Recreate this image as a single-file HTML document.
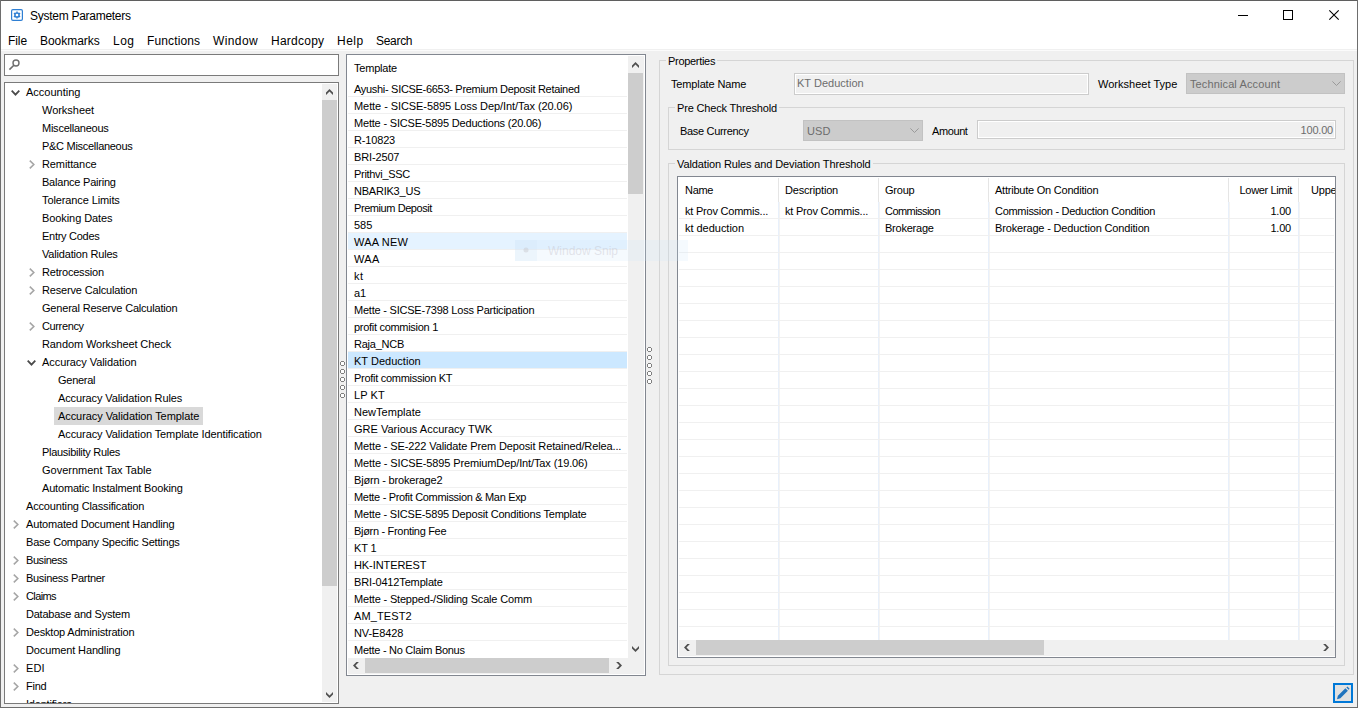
<!DOCTYPE html>
<html><head><meta charset="utf-8"><title>System Parameters</title>
<style>
*{box-sizing:border-box;margin:0;padding:0}
html,body{width:1358px;height:708px;overflow:hidden;background:#f0f0f0}
body{position:relative;font-family:"Liberation Sans", sans-serif;font-size:11px;color:#000}
.a{position:absolute}
.t{position:absolute;white-space:nowrap;line-height:1;letter-spacing:-0.2px}
.s{position:absolute;white-space:nowrap;line-height:1;font-size:12px}
svg{position:absolute;overflow:visible}
.dis{color:#6d6d6d}
</style></head><body>

<div class="a" style="left:0px;top:0px;width:1358px;height:49px;background:#fff;"></div>
<div class="a" style="left:0px;top:49px;width:1358px;height:1px;background:#f0f0f0;"></div>
<div class="a" style="left:0px;top:50px;width:1358px;height:1px;background:#fbfbfb;"></div>
<svg style="left:11px;top:9px" width="12" height="12" viewBox="0 0 12 12">
<rect x="0.6" y="0.6" width="10.8" height="10.8" rx="1.3" fill="#fff" stroke="#2f7fd3" stroke-width="1.2"/>
<circle cx="6" cy="6" r="2.1" fill="none" stroke="#2f7fd3" stroke-width="1.5"/>
<path d="M6 2.5v1.3M6 8.2v1.3M2.9 4.2l1.1.6M8 7.2l1.1.6M2.9 7.8l1.1-.6M8 4.8l1.1-.6" stroke="#2f7fd3" stroke-width="1.4"/>
</svg>
<div class="s" style="left:30px;top:10px;letter-spacing:-0.275px">System Parameters</div>
<div class="a" style="left:1238px;top:15px;width:10px;height:1px;background:#000;"></div>
<div class="a" style="left:1283px;top:10px;width:10px;height:10px;background:transparent;border:1px solid #000"></div>
<svg style="left:1329px;top:10px" width="10" height="10" viewBox="0 0 10 10"><path d="M0.3 0.3L9.7 9.7M9.7 0.3L0.3 9.7" stroke="#000" stroke-width="1.1"/></svg>
<div class="s" style="left:8px;top:35px;letter-spacing:-0.067px">File</div>
<div class="s" style="left:40px;top:35px;letter-spacing:-0.037px">Bookmarks</div>
<div class="s" style="left:113px;top:35px;letter-spacing:0.5px">Log</div>
<div class="s" style="left:147px;top:35px;letter-spacing:0.125px">Functions</div>
<div class="s" style="left:213px;top:35px;letter-spacing:0.4px">Window</div>
<div class="s" style="left:271px;top:35px;letter-spacing:0.243px">Hardcopy</div>
<div class="s" style="left:337px;top:35px;letter-spacing:0.5px">Help</div>
<div class="s" style="left:376px;top:35px;letter-spacing:-0.3px">Search</div>
<div class="a" style="left:4px;top:54px;width:335px;height:22px;background:#fff;border:1px solid #7a7a7a"></div>
<svg style="left:8px;top:58px" width="12" height="13" viewBox="0 0 12 13"><circle cx="8" cy="5" r="3" fill="none" stroke="#6e6e6e" stroke-width="1.4"/><path d="M5.9 7.2L1.4 11.6" stroke="#6e6e6e" stroke-width="1.6"/></svg>
<div class="a" style="left:4px;top:82px;width:335px;height:622px;background:#fff;border:1px solid #7a7a7a"></div>
<div class="a" style="left:5px;top:83px;width:333px;height:620px;overflow:hidden">
<div class="a" style="left:317px;top:1px;width:15px;height:618px;background:#f0f0f0;"></div>
<div class="a" style="left:317px;top:17px;width:15px;height:486px;background:#cdcdcd;"></div>
<svg style="left:321px;top:6px" width="7" height="6" viewBox="0 0 7 6"><polygon points="0,3.4 3.5,0 7,3.4 7,5.9 3.5,2.5 0,5.9" fill="#505050"/></svg>
<svg style="left:321px;top:609px" width="7" height="6" viewBox="0 0 7 6"><polygon points="0,0.1 3.5,3.5 7,0.1 7,2.6 3.5,6 0,2.6" fill="#505050"/></svg>
<svg style="left:6px;top:7px" width="9" height="6" viewBox="0 0 9 6"><path d="M0.7 0.7L4.5 4.6L8.3 0.7" fill="none" stroke="#4a4a4a" stroke-width="1.8"/></svg>
<div class="t" style="left:21px;top:4px;letter-spacing:0.0px">Accounting</div>
<div class="t" style="left:37px;top:22px;letter-spacing:-0.031px">Worksheet</div>
<div class="t" style="left:37px;top:40px;letter-spacing:-0.242px">Miscellaneous</div>
<div class="t" style="left:37px;top:58px;letter-spacing:-0.287px">P&amp;C Miscellaneous</div>
<svg style="left:24px;top:77px" width="6" height="9" viewBox="0 0 6 9"><path d="M0.8 0.6L4.8 4.5L0.8 8.4" fill="none" stroke="#a6a6a6" stroke-width="1.6"/></svg>
<div class="t" style="left:37px;top:76px;letter-spacing:-0.111px">Remittance</div>
<div class="t" style="left:37px;top:94px;letter-spacing:-0.221px">Balance Pairing</div>
<div class="t" style="left:37px;top:112px;letter-spacing:-0.107px">Tolerance Limits</div>
<div class="t" style="left:37px;top:130px;letter-spacing:-0.083px">Booking Dates</div>
<div class="t" style="left:37px;top:148px;letter-spacing:-0.28px">Entry Codes</div>
<div class="t" style="left:37px;top:166px;letter-spacing:-0.187px">Validation Rules</div>
<svg style="left:24px;top:185px" width="6" height="9" viewBox="0 0 6 9"><path d="M0.8 0.6L4.8 4.5L0.8 8.4" fill="none" stroke="#a6a6a6" stroke-width="1.6"/></svg>
<div class="t" style="left:37px;top:184px;letter-spacing:-0.2px">Retrocession</div>
<svg style="left:24px;top:203px" width="6" height="9" viewBox="0 0 6 9"><path d="M0.8 0.6L4.8 4.5L0.8 8.4" fill="none" stroke="#a6a6a6" stroke-width="1.6"/></svg>
<div class="t" style="left:37px;top:202px;letter-spacing:-0.167px">Reserve Calculation</div>
<div class="t" style="left:37px;top:220px;letter-spacing:-0.192px">General Reserve Calculation</div>
<svg style="left:24px;top:239px" width="6" height="9" viewBox="0 0 6 9"><path d="M0.8 0.6L4.8 4.5L0.8 8.4" fill="none" stroke="#a6a6a6" stroke-width="1.6"/></svg>
<div class="t" style="left:37px;top:238px;letter-spacing:-0.371px">Currency</div>
<div class="t" style="left:37px;top:256px;letter-spacing:-0.1px">Random Worksheet Check</div>
<svg style="left:22px;top:277px" width="9" height="6" viewBox="0 0 9 6"><path d="M0.7 0.7L4.5 4.6L8.3 0.7" fill="none" stroke="#4a4a4a" stroke-width="1.8"/></svg>
<div class="t" style="left:37px;top:274px;letter-spacing:-0.067px">Accuracy Validation</div>
<div class="t" style="left:53px;top:292px;letter-spacing:-0.267px">General</div>
<div class="t" style="left:53px;top:310px;letter-spacing:-0.112px">Accuracy Validation Rules</div>
<div class="a" style="left:49px;top:324px;width:149px;height:18px;background:#d9d9d9;"></div>
<div class="t" style="left:53px;top:328px;letter-spacing:-0.074px">Accuracy Validation Template</div>
<div class="t" style="left:53px;top:346px;letter-spacing:-0.098px">Accuracy Validation Template Identification</div>
<div class="t" style="left:37px;top:364px;letter-spacing:-0.288px">Plausibility Rules</div>
<div class="t" style="left:37px;top:382px;letter-spacing:0.0px">Government Tax Table</div>
<div class="t" style="left:37px;top:400px;letter-spacing:-0.174px">Automatic Instalment Booking</div>
<div class="t" style="left:21px;top:418px;letter-spacing:-0.163px">Accounting Classification</div>
<svg style="left:8px;top:437px" width="6" height="9" viewBox="0 0 6 9"><path d="M0.8 0.6L4.8 4.5L0.8 8.4" fill="none" stroke="#a6a6a6" stroke-width="1.6"/></svg>
<div class="t" style="left:21px;top:436px;letter-spacing:-0.162px">Automated Document Handling</div>
<div class="t" style="left:21px;top:454px;letter-spacing:-0.197px">Base Company Specific Settings</div>
<svg style="left:8px;top:473px" width="6" height="9" viewBox="0 0 6 9"><path d="M0.8 0.6L4.8 4.5L0.8 8.4" fill="none" stroke="#a6a6a6" stroke-width="1.6"/></svg>
<div class="t" style="left:21px;top:472px;letter-spacing:-0.443px">Business</div>
<svg style="left:8px;top:491px" width="6" height="9" viewBox="0 0 6 9"><path d="M0.8 0.6L4.8 4.5L0.8 8.4" fill="none" stroke="#a6a6a6" stroke-width="1.6"/></svg>
<div class="t" style="left:21px;top:490px;letter-spacing:-0.3px">Business Partner</div>
<svg style="left:8px;top:509px" width="6" height="9" viewBox="0 0 6 9"><path d="M0.8 0.6L4.8 4.5L0.8 8.4" fill="none" stroke="#a6a6a6" stroke-width="1.6"/></svg>
<div class="t" style="left:21px;top:508px;letter-spacing:-0.6px">Claims</div>
<div class="t" style="left:21px;top:526px;letter-spacing:-0.228px">Database and System</div>
<svg style="left:8px;top:545px" width="6" height="9" viewBox="0 0 6 9"><path d="M0.8 0.6L4.8 4.5L0.8 8.4" fill="none" stroke="#a6a6a6" stroke-width="1.6"/></svg>
<div class="t" style="left:21px;top:544px;letter-spacing:-0.19px">Desktop Administration</div>
<div class="t" style="left:21px;top:562px;letter-spacing:-0.125px">Document Handling</div>
<svg style="left:8px;top:581px" width="6" height="9" viewBox="0 0 6 9"><path d="M0.8 0.6L4.8 4.5L0.8 8.4" fill="none" stroke="#a6a6a6" stroke-width="1.6"/></svg>
<div class="t" style="left:21px;top:580px;letter-spacing:0.15px">EDI</div>
<svg style="left:8px;top:599px" width="6" height="9" viewBox="0 0 6 9"><path d="M0.8 0.6L4.8 4.5L0.8 8.4" fill="none" stroke="#a6a6a6" stroke-width="1.6"/></svg>
<div class="t" style="left:21px;top:598px;letter-spacing:-0.267px">Find</div>
<div class="t" style="left:21px;top:616px;">Identifiers</div>
</div>
<svg style="left:340px;top:361px" width="5" height="5" viewBox="0 0 5 5" shape-rendering="crispEdges"><rect x="1" y="1" width="3" height="3" fill="#fff"/><rect x="1" y="0" width="3" height="1" fill="#808080"/><rect x="1" y="4" width="3" height="1" fill="#808080"/><rect x="0" y="1" width="1" height="3" fill="#808080"/><rect x="4" y="1" width="1" height="3" fill="#808080"/></svg>
<svg style="left:340px;top:369px" width="5" height="5" viewBox="0 0 5 5" shape-rendering="crispEdges"><rect x="1" y="1" width="3" height="3" fill="#fff"/><rect x="1" y="0" width="3" height="1" fill="#808080"/><rect x="1" y="4" width="3" height="1" fill="#808080"/><rect x="0" y="1" width="1" height="3" fill="#808080"/><rect x="4" y="1" width="1" height="3" fill="#808080"/></svg>
<svg style="left:340px;top:377px" width="5" height="5" viewBox="0 0 5 5" shape-rendering="crispEdges"><rect x="1" y="1" width="3" height="3" fill="#fff"/><rect x="1" y="0" width="3" height="1" fill="#808080"/><rect x="1" y="4" width="3" height="1" fill="#808080"/><rect x="0" y="1" width="1" height="3" fill="#808080"/><rect x="4" y="1" width="1" height="3" fill="#808080"/></svg>
<svg style="left:340px;top:385px" width="5" height="5" viewBox="0 0 5 5" shape-rendering="crispEdges"><rect x="1" y="1" width="3" height="3" fill="#fff"/><rect x="1" y="0" width="3" height="1" fill="#808080"/><rect x="1" y="4" width="3" height="1" fill="#808080"/><rect x="0" y="1" width="1" height="3" fill="#808080"/><rect x="4" y="1" width="1" height="3" fill="#808080"/></svg>
<svg style="left:340px;top:393px" width="5" height="5" viewBox="0 0 5 5" shape-rendering="crispEdges"><rect x="1" y="1" width="3" height="3" fill="#fff"/><rect x="1" y="0" width="3" height="1" fill="#808080"/><rect x="1" y="4" width="3" height="1" fill="#808080"/><rect x="0" y="1" width="1" height="3" fill="#808080"/><rect x="4" y="1" width="1" height="3" fill="#808080"/></svg>
<div class="a" style="left:346px;top:54px;width:300px;height:622px;background:#fff;border:1px solid #828790"></div>
<div class="a" style="left:347px;top:55px;width:298px;height:620px;overflow:hidden">
<div class="t" style="left:7px;top:8px;">Template</div>
<div class="a" style="left:1px;top:41px;width:279px;height:1px;background:#f0f0f0;"></div>
<div class="t" style="left:7px;top:29px;letter-spacing:-0.302px">Ayushi- SICSE-6653- Premium Deposit Retained</div>
<div class="a" style="left:1px;top:58px;width:279px;height:1px;background:#f0f0f0;"></div>
<div class="t" style="left:7px;top:46px;letter-spacing:-0.071px">Mette - SICSE-5895 Loss Dep/Int/Tax (20.06)</div>
<div class="a" style="left:1px;top:75px;width:279px;height:1px;background:#f0f0f0;"></div>
<div class="t" style="left:7px;top:63px;letter-spacing:-0.194px">Mette - SICSE-5895 Deductions (20.06)</div>
<div class="a" style="left:1px;top:92px;width:279px;height:1px;background:#f0f0f0;"></div>
<div class="t" style="left:7px;top:80px;letter-spacing:-0.167px">R-10823</div>
<div class="a" style="left:1px;top:109px;width:279px;height:1px;background:#f0f0f0;"></div>
<div class="t" style="left:7px;top:97px;letter-spacing:-0.143px">BRI-2507</div>
<div class="a" style="left:1px;top:126px;width:279px;height:1px;background:#f0f0f0;"></div>
<div class="t" style="left:7px;top:114px;letter-spacing:-0.3px">Prithvi_SSC</div>
<div class="a" style="left:1px;top:143px;width:279px;height:1px;background:#f0f0f0;"></div>
<div class="t" style="left:7px;top:131px;letter-spacing:-0.222px">NBARIK3_US</div>
<div class="a" style="left:1px;top:160px;width:279px;height:1px;background:#f0f0f0;"></div>
<div class="t" style="left:7px;top:148px;letter-spacing:-0.429px">Premium Deposit</div>
<div class="a" style="left:1px;top:177px;width:279px;height:1px;background:#f0f0f0;"></div>
<div class="t" style="left:7px;top:165px;letter-spacing:0.0px">585</div>
<div class="a" style="left:1px;top:178px;width:279px;height:16px;background:#e5f3ff;"></div>
<div class="a" style="left:1px;top:194px;width:279px;height:1px;background:#f0f0f0;"></div>
<div class="t" style="left:7px;top:182px;letter-spacing:0.167px">WAA NEW</div>
<div class="a" style="left:1px;top:211px;width:279px;height:1px;background:#f0f0f0;"></div>
<div class="t" style="left:7px;top:199px;letter-spacing:0.35px">WAA</div>
<div class="a" style="left:1px;top:228px;width:279px;height:1px;background:#f0f0f0;"></div>
<div class="t" style="left:7px;top:216px;letter-spacing:0.4px">kt</div>
<div class="a" style="left:1px;top:245px;width:279px;height:1px;background:#f0f0f0;"></div>
<div class="t" style="left:7px;top:233px;letter-spacing:-0.2px">a1</div>
<div class="a" style="left:1px;top:262px;width:279px;height:1px;background:#f0f0f0;"></div>
<div class="t" style="left:7px;top:250px;letter-spacing:-0.217px">Mette - SICSE-7398 Loss Participation</div>
<div class="a" style="left:1px;top:279px;width:279px;height:1px;background:#f0f0f0;"></div>
<div class="t" style="left:7px;top:267px;letter-spacing:-0.294px">profit commision 1</div>
<div class="a" style="left:1px;top:296px;width:279px;height:1px;background:#f0f0f0;"></div>
<div class="t" style="left:7px;top:284px;letter-spacing:-0.243px">Raja_NCB</div>
<div class="a" style="left:1px;top:297px;width:279px;height:16px;background:#cce8ff;"></div>
<div class="a" style="left:1px;top:313px;width:279px;height:1px;background:#f0f0f0;"></div>
<div class="t" style="left:7px;top:301px;letter-spacing:0.018px">KT Deduction</div>
<div class="a" style="left:1px;top:330px;width:279px;height:1px;background:#f0f0f0;"></div>
<div class="t" style="left:7px;top:318px;letter-spacing:-0.284px">Profit commission KT</div>
<div class="a" style="left:1px;top:347px;width:279px;height:1px;background:#f0f0f0;"></div>
<div class="t" style="left:7px;top:335px;letter-spacing:0.075px">LP KT</div>
<div class="a" style="left:1px;top:364px;width:279px;height:1px;background:#f0f0f0;"></div>
<div class="t" style="left:7px;top:352px;letter-spacing:0.02px">NewTemplate</div>
<div class="a" style="left:1px;top:381px;width:279px;height:1px;background:#f0f0f0;"></div>
<div class="t" style="left:7px;top:369px;letter-spacing:0.0px">GRE Various Accuracy TWK</div>
<div class="a" style="left:1px;top:398px;width:279px;height:1px;background:#f0f0f0;"></div>
<div class="t" style="left:7px;top:386px;letter-spacing:-0.119px">Mette - SE-222 Validate Prem Deposit Retained/Relea...</div>
<div class="a" style="left:1px;top:415px;width:279px;height:1px;background:#f0f0f0;"></div>
<div class="t" style="left:7px;top:403px;letter-spacing:-0.12px">Mette - SICSE-5895 PremiumDep/Int/Tax (19.06)</div>
<div class="a" style="left:1px;top:432px;width:279px;height:1px;background:#f0f0f0;"></div>
<div class="t" style="left:7px;top:420px;letter-spacing:-0.182px">Bjørn - brokerage2</div>
<div class="a" style="left:1px;top:449px;width:279px;height:1px;background:#f0f0f0;"></div>
<div class="t" style="left:7px;top:437px;letter-spacing:-0.321px">Mette - Profit Commission &amp; Man Exp</div>
<div class="a" style="left:1px;top:466px;width:279px;height:1px;background:#f0f0f0;"></div>
<div class="t" style="left:7px;top:454px;letter-spacing:-0.191px">Mette - SICSE-5895 Deposit Conditions Template</div>
<div class="a" style="left:1px;top:483px;width:279px;height:1px;background:#f0f0f0;"></div>
<div class="t" style="left:7px;top:471px;letter-spacing:-0.311px">Bjørn - Fronting Fee</div>
<div class="a" style="left:1px;top:500px;width:279px;height:1px;background:#f0f0f0;"></div>
<div class="t" style="left:7px;top:488px;letter-spacing:-0.133px">KT 1</div>
<div class="a" style="left:1px;top:517px;width:279px;height:1px;background:#f0f0f0;"></div>
<div class="t" style="left:7px;top:505px;letter-spacing:-0.08px">HK-INTEREST</div>
<div class="a" style="left:1px;top:534px;width:279px;height:1px;background:#f0f0f0;"></div>
<div class="t" style="left:7px;top:522px;letter-spacing:-0.147px">BRI-0412Template</div>
<div class="a" style="left:1px;top:551px;width:279px;height:1px;background:#f0f0f0;"></div>
<div class="t" style="left:7px;top:539px;letter-spacing:-0.176px">Mette - Stepped-/Sliding Scale Comm</div>
<div class="a" style="left:1px;top:568px;width:279px;height:1px;background:#f0f0f0;"></div>
<div class="t" style="left:7px;top:556px;letter-spacing:0.114px">AM_TEST2</div>
<div class="a" style="left:1px;top:585px;width:279px;height:1px;background:#f0f0f0;"></div>
<div class="t" style="left:7px;top:573px;letter-spacing:-0.1px">NV-E8428</div>
<div class="t" style="left:7px;top:590px;letter-spacing:-0.276px">Mette - No Claim Bonus</div>
<div class="a" style="left:281px;top:1px;width:16px;height:618px;background:#f0f0f0;"></div>
<div class="a" style="left:281px;top:18px;width:15px;height:121px;background:#cdcdcd;"></div>
<svg style="left:285px;top:7px" width="7" height="6" viewBox="0 0 7 6"><polygon points="0,3.4 3.5,0 7,3.4 7,5.9 3.5,2.5 0,5.9" fill="#505050"/></svg>
<svg style="left:285px;top:591px" width="7" height="6" viewBox="0 0 7 6"><polygon points="0,0.1 3.5,3.5 7,0.1 7,2.6 3.5,6 0,2.6" fill="#505050"/></svg>
<div class="a" style="left:1px;top:603px;width:280px;height:16px;background:#f0f0f0;"></div>
<div class="a" style="left:18px;top:603px;width:244px;height:15px;background:#cdcdcd;"></div>
<svg style="left:6px;top:607px" width="6" height="7" viewBox="0 0 6 7"><polygon points="3.4,0 0,3.5 3.4,7 5.9,7 2.5,3.5 5.9,0" fill="#505050"/></svg>
<svg style="left:269px;top:607px" width="6" height="7" viewBox="0 0 6 7"><polygon points="0.1,0 3.5,3.5 0.1,7 2.6,7 6,3.5 2.6,0" fill="#505050"/></svg>
</div>
<svg style="left:647px;top:347px" width="5" height="5" viewBox="0 0 5 5" shape-rendering="crispEdges"><rect x="1" y="1" width="3" height="3" fill="#fff"/><rect x="1" y="0" width="3" height="1" fill="#808080"/><rect x="1" y="4" width="3" height="1" fill="#808080"/><rect x="0" y="1" width="1" height="3" fill="#808080"/><rect x="4" y="1" width="1" height="3" fill="#808080"/></svg>
<svg style="left:647px;top:355px" width="5" height="5" viewBox="0 0 5 5" shape-rendering="crispEdges"><rect x="1" y="1" width="3" height="3" fill="#fff"/><rect x="1" y="0" width="3" height="1" fill="#808080"/><rect x="1" y="4" width="3" height="1" fill="#808080"/><rect x="0" y="1" width="1" height="3" fill="#808080"/><rect x="4" y="1" width="1" height="3" fill="#808080"/></svg>
<svg style="left:647px;top:363px" width="5" height="5" viewBox="0 0 5 5" shape-rendering="crispEdges"><rect x="1" y="1" width="3" height="3" fill="#fff"/><rect x="1" y="0" width="3" height="1" fill="#808080"/><rect x="1" y="4" width="3" height="1" fill="#808080"/><rect x="0" y="1" width="1" height="3" fill="#808080"/><rect x="4" y="1" width="1" height="3" fill="#808080"/></svg>
<svg style="left:647px;top:371px" width="5" height="5" viewBox="0 0 5 5" shape-rendering="crispEdges"><rect x="1" y="1" width="3" height="3" fill="#fff"/><rect x="1" y="0" width="3" height="1" fill="#808080"/><rect x="1" y="4" width="3" height="1" fill="#808080"/><rect x="0" y="1" width="1" height="3" fill="#808080"/><rect x="4" y="1" width="1" height="3" fill="#808080"/></svg>
<svg style="left:647px;top:379px" width="5" height="5" viewBox="0 0 5 5" shape-rendering="crispEdges"><rect x="1" y="1" width="3" height="3" fill="#fff"/><rect x="1" y="0" width="3" height="1" fill="#808080"/><rect x="1" y="4" width="3" height="1" fill="#808080"/><rect x="0" y="1" width="1" height="3" fill="#808080"/><rect x="4" y="1" width="1" height="3" fill="#808080"/></svg>
<div class="a" style="left:659px;top:60px;width:695px;height:615px;background:transparent;border:1px solid #d5d5d5"></div>
<div class="t" style="left:666px;top:56px;background:#f0f0f0;padding:0 2px 0 2px;letter-spacing:-0.3px">Properties</div>
<div class="t" style="left:671px;top:79px;letter-spacing:-0.142px">Template Name</div>
<div class="a" style="left:794px;top:73px;width:295px;height:22px;background:#f0f0f0;border:1px solid #cccccc;box-shadow:inset 0 0 0 1px #fff"></div>
<div class="t dis" style="left:797px;top:78px;letter-spacing:0.018px">KT Deduction</div>
<div class="t" style="left:1098px;top:79px;letter-spacing:0.023px">Worksheet Type</div>
<div class="a" style="left:1186px;top:73px;width:159px;height:21px;background:#cccccc;border:1px solid #c2c2c2"></div>
<div class="t dis" style="left:1190px;top:79px;letter-spacing:0.119px">Technical Account</div>
<svg style="left:1332px;top:81px" width="9" height="5" viewBox="0 0 9 5"><path d="M0.4 0.4L4.5 4.5L8.6 0.4" fill="none" stroke="#9a9a9a" stroke-width="1"/></svg>
<div class="a" style="left:668px;top:107px;width:677px;height:43px;background:transparent;border:1px solid #d5d5d5"></div>
<div class="t" style="left:675px;top:103px;background:#f0f0f0;padding:0 2px 0 2px;letter-spacing:-0.167px">Pre Check Threshold</div>
<div class="t" style="left:680px;top:126px;letter-spacing:-0.317px">Base Currency</div>
<div class="a" style="left:803px;top:120px;width:120px;height:21px;background:#cccccc;border:1px solid #c2c2c2"></div>
<div class="t dis" style="left:807px;top:126px;letter-spacing:0.1px">USD</div>
<svg style="left:910px;top:128px" width="9" height="5" viewBox="0 0 9 5"><path d="M0.4 0.4L4.5 4.5L8.6 0.4" fill="none" stroke="#9a9a9a" stroke-width="1"/></svg>
<div class="t" style="left:932px;top:126px;letter-spacing:-0.4px">Amount</div>
<div class="a" style="left:977px;top:120px;width:359px;height:19px;background:#f0f0f0;border:1px solid #cccccc;box-shadow:inset 0 0 0 1px #fff"></div>
<div class="t dis" style="left:1233px;top:125px;width:100px;text-align:right">100.00</div>
<div class="a" style="left:668px;top:163px;width:677px;height:503px;background:transparent;border:1px solid #d5d5d5"></div>
<div class="t" style="left:675px;top:159px;background:#f0f0f0;padding:0 2px 0 2px;letter-spacing:-0.121px">Valdation Rules and Deviation Threshold</div>
<div class="a" style="left:677px;top:176px;width:659px;height:482px;background:#fff;border:1px solid #828790"></div>
<div class="a" style="left:678px;top:177px;width:657px;height:480px;overflow:hidden">
<div class="a" style="left:100px;top:1px;width:1px;height:24px;background:#e5e5e5;"></div>
<div class="a" style="left:100px;top:25px;width:1px;height:438px;background:#e8f0fb;"></div>
<div class="a" style="left:101px;top:25px;width:1px;height:438px;background:#f3f3f3;"></div>
<div class="a" style="left:200px;top:1px;width:1px;height:24px;background:#e5e5e5;"></div>
<div class="a" style="left:200px;top:25px;width:1px;height:438px;background:#e8f0fb;"></div>
<div class="a" style="left:201px;top:25px;width:1px;height:438px;background:#f3f3f3;"></div>
<div class="a" style="left:310px;top:1px;width:1px;height:24px;background:#e5e5e5;"></div>
<div class="a" style="left:310px;top:25px;width:1px;height:438px;background:#e8f0fb;"></div>
<div class="a" style="left:311px;top:25px;width:1px;height:438px;background:#f3f3f3;"></div>
<div class="a" style="left:550px;top:1px;width:1px;height:24px;background:#e5e5e5;"></div>
<div class="a" style="left:550px;top:25px;width:1px;height:438px;background:#e8f0fb;"></div>
<div class="a" style="left:551px;top:25px;width:1px;height:438px;background:#f3f3f3;"></div>
<div class="a" style="left:620px;top:1px;width:1px;height:24px;background:#e5e5e5;"></div>
<div class="a" style="left:620px;top:25px;width:1px;height:438px;background:#e8f0fb;"></div>
<div class="a" style="left:621px;top:25px;width:1px;height:438px;background:#f3f3f3;"></div>
<div class="a" style="left:1px;top:41px;width:655px;height:1px;background:#f0f0f0;"></div>
<div class="a" style="left:1px;top:58px;width:655px;height:1px;background:#f0f0f0;"></div>
<div class="a" style="left:1px;top:75px;width:655px;height:1px;background:#f0f0f0;"></div>
<div class="a" style="left:1px;top:92px;width:655px;height:1px;background:#f0f0f0;"></div>
<div class="a" style="left:1px;top:109px;width:655px;height:1px;background:#f0f0f0;"></div>
<div class="a" style="left:1px;top:126px;width:655px;height:1px;background:#f0f0f0;"></div>
<div class="a" style="left:1px;top:143px;width:655px;height:1px;background:#f0f0f0;"></div>
<div class="a" style="left:1px;top:160px;width:655px;height:1px;background:#f0f0f0;"></div>
<div class="a" style="left:1px;top:177px;width:655px;height:1px;background:#f0f0f0;"></div>
<div class="a" style="left:1px;top:194px;width:655px;height:1px;background:#f0f0f0;"></div>
<div class="a" style="left:1px;top:211px;width:655px;height:1px;background:#f0f0f0;"></div>
<div class="a" style="left:1px;top:228px;width:655px;height:1px;background:#f0f0f0;"></div>
<div class="a" style="left:1px;top:245px;width:655px;height:1px;background:#f0f0f0;"></div>
<div class="a" style="left:1px;top:262px;width:655px;height:1px;background:#f0f0f0;"></div>
<div class="a" style="left:1px;top:279px;width:655px;height:1px;background:#f0f0f0;"></div>
<div class="a" style="left:1px;top:296px;width:655px;height:1px;background:#f0f0f0;"></div>
<div class="a" style="left:1px;top:313px;width:655px;height:1px;background:#f0f0f0;"></div>
<div class="a" style="left:1px;top:330px;width:655px;height:1px;background:#f0f0f0;"></div>
<div class="a" style="left:1px;top:347px;width:655px;height:1px;background:#f0f0f0;"></div>
<div class="a" style="left:1px;top:364px;width:655px;height:1px;background:#f0f0f0;"></div>
<div class="a" style="left:1px;top:381px;width:655px;height:1px;background:#f0f0f0;"></div>
<div class="a" style="left:1px;top:398px;width:655px;height:1px;background:#f0f0f0;"></div>
<div class="a" style="left:1px;top:415px;width:655px;height:1px;background:#f0f0f0;"></div>
<div class="a" style="left:1px;top:432px;width:655px;height:1px;background:#f0f0f0;"></div>
<div class="a" style="left:1px;top:449px;width:655px;height:1px;background:#f0f0f0;"></div>
<div class="t" style="left:7px;top:8px;letter-spacing:-0.3px">Name</div>
<div class="t" style="left:107px;top:8px;letter-spacing:-0.18px">Description</div>
<div class="t" style="left:207px;top:8px;letter-spacing:-0.225px">Group</div>
<div class="t" style="left:317px;top:8px;letter-spacing:-0.224px">Attribute On Condition</div>
<div class="t" style="left:514px;top:8px;width:100px;text-align:right;letter-spacing:-0.35px">Lower Limit</div>
<div class="t" style="left:633px;top:8px;">Upper Limit</div>
<div class="t" style="left:7px;top:29px;letter-spacing:-0.219px">kt Prov Commis...</div>
<div class="t" style="left:107px;top:29px;letter-spacing:-0.219px">kt Prov Commis...</div>
<div class="t" style="left:207px;top:29px;letter-spacing:-0.556px">Commission</div>
<div class="t" style="left:317px;top:29px;letter-spacing:-0.29px">Commission - Deduction Condition</div>
<div class="t" style="left:513px;top:29px;width:100px;text-align:right">1.00</div>
<div class="t" style="left:7px;top:46px;letter-spacing:-0.027px">kt deduction</div>
<div class="t" style="left:207px;top:46px;letter-spacing:-0.225px">Brokerage</div>
<div class="t" style="left:317px;top:46px;letter-spacing:-0.163px">Brokerage - Deduction Condition</div>
<div class="t" style="left:513px;top:46px;width:100px;text-align:right">1.00</div>
<div class="a" style="left:1px;top:463px;width:656px;height:16px;background:#f0f0f0;"></div>
<div class="a" style="left:18px;top:463px;width:348px;height:15px;background:#cdcdcd;"></div>
<svg style="left:6px;top:467px" width="6" height="7" viewBox="0 0 6 7"><polygon points="3.4,0 0,3.5 3.4,7 5.9,7 2.5,3.5 5.9,0" fill="#505050"/></svg>
<svg style="left:645px;top:467px" width="6" height="7" viewBox="0 0 6 7"><polygon points="0.1,0 3.5,3.5 0.1,7 2.6,7 6,3.5 2.6,0" fill="#505050"/></svg>
</div>
<div class="a" style="left:1333px;top:683px;width:20px;height:20px;background:#e1e1e1;border:2px solid #0078d7"></div>
<svg style="left:1335px;top:685px" width="17" height="16" viewBox="0 0 17 16"><path d="M2 14.2L2.9 10.8L10.4 3.3L12.9 5.8L5.4 13.3Z" fill="#1e73be"/><path d="M11.4 2.6L12.4 1.6L14.6 3.8L13.6 4.8Z" fill="#1e73be"/></svg>
<div class="a" style="left:515px;top:240px;width:173px;height:21px;background:rgba(205,228,248,0.2);"></div>
<div class="a" style="left:515px;top:240px;width:22px;height:21px;background:rgba(205,228,248,0.22);"></div>
<svg style="left:523px;top:247px" width="6" height="6"><circle cx="3" cy="3" r="2.5" fill="rgba(200,200,205,0.45)"/></svg>
<div class="t" style="left:548px;top:245px;font-size:12px;color:rgba(185,180,190,0.35);letter-spacing:0px">Window Snip</div>
<div class="a" style="left:0px;top:0px;width:1358px;height:1px;background:#5f5f5f;"></div>
<div class="a" style="left:0px;top:0px;width:1px;height:708px;background:#6e6e6e;"></div>
<div class="a" style="left:1357px;top:0px;width:1px;height:708px;background:#6e6e6e;"></div>
<div class="a" style="left:0px;top:707px;width:1358px;height:1px;background:#6e6e6e;"></div>
</body></html>
